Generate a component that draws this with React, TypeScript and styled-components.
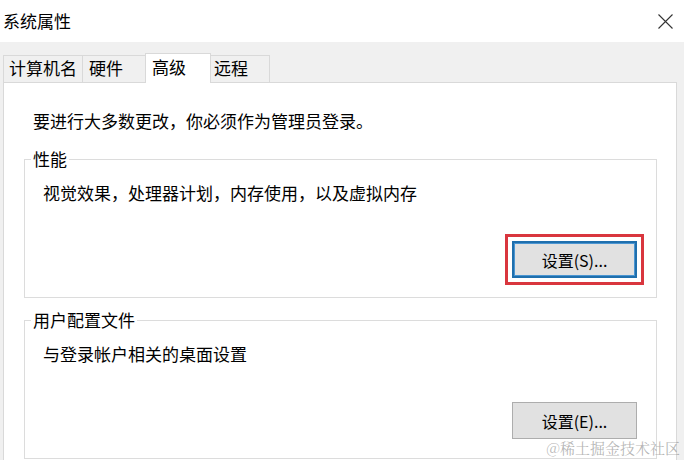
import React from "react";
import styled, { createGlobalStyle } from "styled-components";

const Global = createGlobalStyle`
  html, body { margin: 0; padding: 0; background: #ffffff; }
  body {
    width: 684px; height: 460px; overflow: hidden;
    font-family: "Noto Sans CJK SC", "Noto Sans", sans-serif;
    color: #000;
  }
`;

const Window = styled.div`
  position: relative;
  width: 684px;
  height: 460px;
  overflow: hidden;
  display: flex;
  flex-direction: column;
  background: #f0f0f0;
`;

const TitleBar = styled.div`
  height: 42px;
  flex: none;
  background: #ffffff;
  display: flex;
  align-items: center;
  justify-content: space-between;
  padding: 0 11px 0 3px;
`;

const Title = styled.span`
  font-size: 17px;
  line-height: 24px;
`;

const CloseBtn = styled.span`
  display: flex;
  width: 15px;
  height: 15px;
  margin-top: 1px;
`;

const Body = styled.div`
  flex: 1;
  padding: 11px 7px 0 3px;
  display: flex;
  flex-direction: column;
`;

const TabsRow = styled.div`
  display: flex;
  align-items: flex-end;
  height: 30px;
  margin-bottom: -1px;
  position: relative;
  z-index: 1;
`;

const Tab = styled.div<{ $w: number; $active?: boolean; $pl: number }>`
  box-sizing: border-box;
  width: ${(p) => p.$w}px;
  height: ${(p) => (p.$active ? 30 : 27)}px;
  margin-bottom: ${(p) => (p.$active ? 0 : 1)}px;
  margin-left: -1px;
  &:first-child { margin-left: 0; }
  padding-left: ${(p) => p.$pl}px;
  border: 1px solid #d9d9d9;
  border-bottom: none;
  background: ${(p) => (p.$active ? "#ffffff" : "#f0f0f0")};
  position: relative;
  z-index: ${(p) => (p.$active ? 2 : 1)};
  font-size: 17px;
  line-height: ${(p) => (p.$active ? 25 : 24)}px;
  white-space: nowrap;
`;

const Panel = styled.div`
  flex: 1;
  min-height: 420px;
  background: #ffffff;
  border: 1px solid #d9d9d9;
  padding: 26px 19px 0 20px;
  display: flex;
  flex-direction: column;
`;

const Intro = styled.div`
  font-size: 17px;
  line-height: 24px;
  padding-left: 9px;
  white-space: nowrap;
`;

const Group = styled.fieldset<{ $mt: number }>`
  margin: ${(p) => p.$mt}px 0 0 0;
  border: 1px solid #dcdcdc;
  padding: 10px 19px 19px 6px;
  min-width: 0;
  display: flex;
  flex-direction: column;
`;

const Legend = styled.legend`
  padding: 0 2px;
  font-size: 17px;
  line-height: 24px;
`;

const Desc = styled.div`
  font-size: 17px;
  line-height: 24px;
  padding-left: 12px;
  white-space: nowrap;
`;

const Button = styled.button<{ $focused?: boolean }>`
  align-self: flex-end;
  margin-top: 36px;
  box-sizing: border-box;
  width: 125px;
  height: 37px;
  background: #e1e1e1;
  border: ${(p) => (p.$focused ? "2px solid #1f6fad" : "1px solid #adadad")};
  box-shadow: ${(p) => (p.$focused ? "inset 0 0 0 1px #4a95d2" : "none")};
  outline: ${(p) => (p.$focused ? "3px solid #d9363e" : "none")};
  outline-offset: 4px;
  font-family: "Noto Sans CJK SC", "Noto Sans", sans-serif;
  font-size: 16px;
  line-height: 22px;
  color: #000;
  padding: 0;
`;

const Watermark = styled.div`
  position: absolute;
  right: 4px;
  bottom: 2px;
  font-family: "Noto Serif CJK SC", "Noto Sans CJK SC", serif;
  font-size: 15px;
  line-height: 20px;
  color: rgba(150, 150, 150, 0.7);
  white-space: nowrap;
`;

export default function App() {
  return (
    <>
      <Global />
      <Window>
        <TitleBar>
          <Title>系统属性</Title>
          <CloseBtn>
            <svg width="15" height="15" viewBox="0 0 15 15">
              <path d="M0.5 0.5 L14.5 14.5 M14.5 0.5 L0.5 14.5" stroke="#333" strokeWidth="1.1" fill="none" />
            </svg>
          </CloseBtn>
        </TitleBar>
        <Body>
          <TabsRow>
            <Tab $w={80} $pl={5}>计算机名</Tab>
            <Tab $w={64} $pl={6}>硬件</Tab>
            <Tab $w={66} $pl={6} $active>高级</Tab>
            <Tab $w={60} $pl={3}>远程</Tab>
          </TabsRow>
          <Panel>
            <Intro>要进行大多数更改，你必须作为管理员登录。</Intro>
            <Group $mt={14}>
              <Legend>性能</Legend>
              <Desc>视觉效果，处理器计划，内存使用，以及虚拟内存</Desc>
              <Button $focused>设置(S)...</Button>
            </Group>
            <Group $mt={10}>
              <Legend>用户配置文件</Legend>
              <Desc>与登录帐户相关的桌面设置</Desc>
              <Button>设置(E)...</Button>
            </Group>
          </Panel>
        </Body>
        <Watermark>@稀土掘金技术社区</Watermark>
      </Window>
    </>
  );
}
